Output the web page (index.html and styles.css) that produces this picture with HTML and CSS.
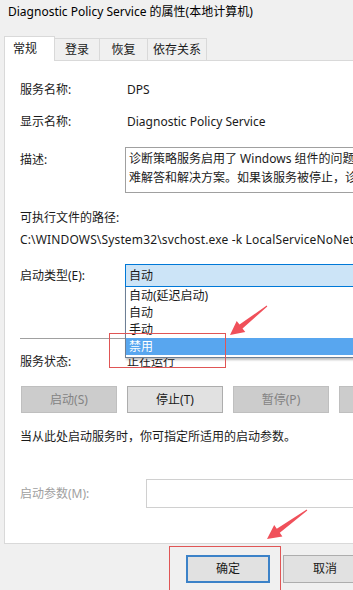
FILE: index.html
```html
<!DOCTYPE html>
<html>
	<head>
		<meta charset="UTF-8">
		<title>Diagnostic Policy Service 的属性</title>
		<link rel="stylesheet" href="styles.css">
	</head>
	<body>
		<div class="window">
			<!--标题-->
			<div class="title">Diagnostic Policy Service 的属性(本地计算机)</div>

			<!--选项卡-->
			<div class="tabs">
				<div class="tab tab-on tab-1">常规</div>
				<div class="tab tab-2">登录</div>
				<div class="tab tab-3">恢复</div>
				<div class="tab tab-4">依存关系</div>
			</div>

			<!--常规页-->
			<div class="panel">
				<div class="row row-name">
					<span class="label">服务名称:</span>
					<span class="value">DPS</span>
				</div>
				<div class="row row-display">
					<span class="label">显示名称:</span>
					<span class="value">Diagnostic Policy Service</span>
				</div>
				<div class="row row-desc">
					<span class="label label-desc">描述:</span>
					<div class="desc-box">诊断策略服务启用了 Windows 组件的问题检测、疑<br>难解答和解决方案。如果该服务被停止，诊断将不再运行。</div>
				</div>
				<div class="row row-pathlabel">可执行文件的路径:</div>
				<div class="row row-path">C:\WINDOWS\System32\svchost.exe -k LocalServiceNoNetwork -p</div>

				<div class="row row-start">
					<span class="label">启动类型(E):</span>
					<div class="combo">
						<div class="combo-value">自动</div>
						<!--展开的下拉列表-->
						<ul class="combo-list">
							<li>自动(延迟启动)</li>
							<li>自动</li>
							<li>手动</li>
							<li class="picked">禁用</li>
						</ul>
					</div>
				</div>

				<div class="sep"></div>

				<div class="row row-status">
					<span class="label">服务状态:</span>
					<span class="value">正在运行</span>
				</div>

				<div class="btn-row">
					<div class="btn btn-off">启动(S)</div>
					<div class="btn">停止(T)</div>
					<div class="btn btn-off">暂停(P)</div>
					<div class="btn btn-off">恢复(R)</div>
				</div>

				<div class="row row-hint">当从此处启动服务时，你可指定所适用的启动参数。</div>

				<div class="row row-param">
					<span class="label label-off">启动参数(M):</span>
					<div class="param-box"></div>
				</div>
			</div>

			<!--底部按钮-->
			<div class="footer">
				<div class="btn btn-ok">确定</div>
				<div class="btn btn-cancel">取消</div>
			</div>
		</div>

		<!--标注: 红框和箭头-->
		<svg class="marks" width="353" height="590" viewBox="0 0 353 590">
			<rect x="109.5" y="333.5" width="116" height="34" fill="none" stroke="#e05555" stroke-width="1"/>
			<rect x="169.5" y="546.5" width="111" height="60" fill="none" stroke="#e05555" stroke-width="1"/>
			<polygon fill="#f0505a" points="267.3,306.4 242.5,328.4 245.3,331.9 230,335 236.7,320.9 239.5,324.4 266.7,305.6"/>
			<polygon fill="#f0505a" points="307.3,510.4 279.8,532.8 282.4,536.5 267,539 274.2,525.1 276.8,528.8 306.7,509.6"/>
		</svg>
	</body>
</html>
```

FILE: styles.css
```css
*{
	margin: 0;
	padding: 0;
	box-sizing: border-box;
}

body{
	background-color: #f0f0f0;
	font-family: "Noto Sans", "Noto Sans CJK SC", sans-serif;
	font-size: 12px;
	color: #1a1a1a;
	overflow: hidden;
	position: relative;
	width: 353px;
	height: 590px;
}

/*整个窗口, 比视口宽, 右边被裁掉*/
.window{
	width: 430px;
}

.title{
	height: 36px;
	line-height: 24px;
	padding-left: 8px;
	font-size: 12px;
	color: #000;
}

/*选项卡*/
.tabs{
	display: flex;
	align-items: flex-end;
	height: 24px;
	margin-left: 4px;
}

.tab{
	height: 22px;
	line-height: 21px;
	text-align: center;
	border: 1px solid #d9d9d9;
	border-bottom: none;
	border-left: none;
	background-color: #f0f0f0;
}

.tab-on{
	height: 25px;
	margin-bottom: -1px;
	line-height: 23px;
	border-left: 1px solid #d9d9d9;
	background-color: #fff;
	position: relative;
	z-index: 1;
	text-align: left;
	padding-left: 8px;
}

.tab-1{ width: 51px; }
.tab-2{ width: 45px; }
.tab-3{ width: 48px; }
.tab-4{ width: 59px; }

/*白色面板*/
.panel{
	margin-left: 4px;
	background-color: #fff;
	border: 1px solid #d9d9d9;
	padding: 19px 0 35px 15px;
}

.row{
	display: flex;
	align-items: center;
	line-height: 20px;
	white-space: nowrap;
}

.label{
	width: 107px;
	flex-shrink: 0;
}

.label-off{
	width: 126px;
	color: #a0a0a0;
}

.row-display{ margin-top: 12px; }

.row-desc{
	margin-top: 15px;
	align-items: flex-start;
}

.label-desc{
	margin-top: 3px;
}

.desc-box{
	margin-left: -2px;
	width: 300px;
	height: 46px;
	border: 1px solid #a0a0a0;
	border-right: none;
	padding: 1px 0 0 3px;
	line-height: 19px;
	overflow: hidden;
}

.row-pathlabel{ margin-top: 15px; }
.row-path{
	margin-top: 2px;
	letter-spacing: 0.15px;
}

/*启动类型下拉框*/
.row-start{ margin-top: 14px; }

.combo{
	position: relative;
	margin-left: -2px;
	width: 300px;
}

.combo-value{
	height: 23px;
	line-height: 21px;
	padding-left: 3px;
	background-color: #cce4f7;
	border: 1px solid #0078d7;
}

.combo-list{
	list-style: none;
	position: absolute;
	top: 23px;
	left: 0;
	right: 0;
	padding-bottom: 2px;
	background-color: #fff;
	border: 1px solid #6d7f95;
	border-top: none;
	box-shadow: 1px 2px 2px rgba(0,0,0,0.25);
	z-index: 5;
}

.combo-list li{
	height: 17px;
	line-height: 17px;
	padding-left: 3px;
}

.combo-list .picked{
	background-color: #58a6ef;
	color: #fff;
}

.sep{
	margin-top: 51px;
	height: 1px;
	background-color: #a0a0a0;
}

.row-status{ margin-top: 13px; }

/*服务按钮*/
.btn-row{
	display: flex;
	gap: 10px;
	margin-top: 14px;
	margin-left: 1px;
}

.btn{
	width: 96px;
	height: 27px;
	line-height: 25px;
	text-align: center;
	background-color: #e1e1e1;
	border: 1px solid #adadad;
	flex-shrink: 0;
}

.btn-off{
	background-color: #cccccc;
	border-color: #bfbfbf;
	color: #838383;
}

.row-hint{ margin-top: 14px; }

.row-param{ margin-top: 32px; }

.param-box{
	width: 300px;
	height: 29px;
	border: 1px solid #d0d0d0;
	border-right: none;
}

/*底部*/
.footer{
	display: flex;
	gap: 13px;
	padding: 11px 0 0 186px;
}

.btn-ok{
	width: 84px;
	height: 28px;
	line-height: 24px;
	border: 2px solid #3c82c8;
}

.btn-cancel{
	width: 84px;
	height: 28px;
}

/*标注层, 盖在界面上*/
.marks{
	position: absolute;
	left: 0;
	top: 0;
	z-index: 10;
	pointer-events: none;
}
```
